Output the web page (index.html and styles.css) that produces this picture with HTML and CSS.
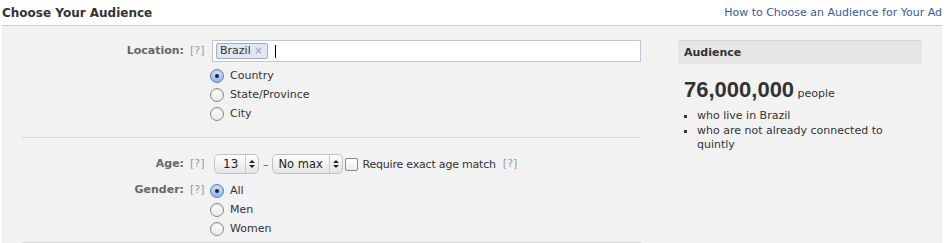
FILE: index.html
```html
<!DOCTYPE html>
<html lang="en">
	<head>
		<meta charset="UTF-8" />
		<title>Choose Your Audience</title>
		<link rel="stylesheet" href="styles.css">
	</head>

	<body>
		<div class="page">
			<div class="page-header">
				<h2 class="page-title">Choose Your Audience</h2>
				<a class="help-link" href="#">How to Choose an Audience for Your Ad</a>
			</div>
			<div class="panel">
				<div class="targeting">
					<div class="field-row">
						<label class="field-label">Location:</label>
						<span class="field-help">[?]</span>
						<div class="field-body">
							<div class="token-input">
								<span class="token">Brazil <span class="token-x">×</span></span>
								<span class="caret"></span>
							</div>
							<ul class="radio-list first-list">
								<li><span class="radio checked"></span>Country</li>
								<li><span class="radio"></span>State/Province</li>
								<li><span class="radio"></span>City</li>
							</ul>
						</div>
					</div>

					<div class="separator"></div>

					<div class="field-row age-row">
						<label class="field-label">Age:</label>
						<span class="field-help">[?]</span>
						<div class="field-body age-controls">
							<span class="select small">13<span class="select-arrows"></span></span>
							<span class="dash">–</span>
							<span class="select wide">No max<span class="select-arrows"></span></span>
							<span class="checkbox"></span>
							<span class="check-label">Require exact age match</span>
							<span class="field-help inline">[?]</span>
						</div>
					</div>

					<div class="field-row gender-row">
						<label class="field-label">Gender:</label>
						<span class="field-help">[?]</span>
						<div class="field-body">
							<ul class="radio-list">
								<li><span class="radio checked"></span>All</li>
								<li><span class="radio"></span>Men</li>
								<li><span class="radio"></span>Women</li>
							</ul>
						</div>
					</div>

					<div class="separator"></div>
				</div>

				<div class="audience">
					<div class="audience-header">Audience</div>
					<div class="audience-count"><strong>76,000,000</strong> people</div>
					<ul class="audience-list">
						<li>who live in Brazil</li>
						<li>who are not already connected to quintly</li>
					</ul>
				</div>
			</div>
		</div>
	</body>
</html>
```

FILE: styles.css
```css
body {
	margin: 0;
	background: #fff;
	color: #333;
	font-family: "DejaVu Sans", sans-serif;
	font-size: 11px;
}

.page {
	width: 940px;
	margin-left: 2px;
}

.page-header {
	display: flex;
	justify-content: space-between;
	align-items: center;
	height: 25px;
	border-bottom: 1px solid #ccc;
}

.page-title {
	margin: 0;
	font-size: 12px;
	font-weight: bold;
	color: #333;
}

.help-link {
	color: #3b5998;
	text-decoration: none;
	font-size: 11px;
}

.panel {
	display: flex;
	background: #f2f2f2;
	padding-top: 14px;
	height: 203px;
}

.targeting {
	width: 639px;
}

.field-row {
	display: flex;
}

.field-label {
	width: 182px;
	text-align: right;
	font-weight: bold;
	color: #666;
	line-height: 22px;
}

.field-help {
	width: 28px;
	padding-left: 6px;
	box-sizing: border-box;
	color: #999;
	line-height: 22px;
}

.field-help.inline {
	width: auto;
	padding-left: 7px;
}

.field-body {
	flex: 1;
}

.token-input {
	display: flex;
	align-items: center;
	height: 20px;
	border: 1px solid #bdc7d8;
	background: #fff;
	padding-left: 3px;
}

.token {
	display: inline-block;
	height: 14px;
	line-height: 14px;
	padding: 0 4px 0 3px;
	border: 1px solid #9daccc;
	border-radius: 2px;
	background: #e2e6f0;
	color: #333;
}

.token-x {
	color: #8f9cbb;
	font-size: 10px;
}

.caret {
	width: 1px;
	height: 13px;
	margin-left: 7px;
	background: #000;
}

.radio-list {
	list-style: none;
	margin: 0;
	padding: 0;
}

.first-list {
	margin-top: 4px;
}

.radio-list li {
	display: flex;
	align-items: center;
	height: 19px;
	color: #333;
}

.radio {
	width: 12px;
	height: 12px;
	margin: 0 6px 0 -2px;
	border: 1px solid #8a8a8a;
	border-radius: 50%;
	background: linear-gradient(#fff, #e8e8e8);
	box-shadow: inset 0 1px 1px rgba(0, 0, 0, 0.15);
	display: flex;
	align-items: center;
	justify-content: center;
}

.radio.checked {
	border-color: #5a7fb8;
	background: linear-gradient(#d6e6fb, #8db6ef);
}

.radio.checked::after {
	content: "";
	width: 4px;
	height: 4px;
	border-radius: 50%;
	background: #222;
}

.separator {
	height: 1px;
	background: #d6d6d6;
	margin-left: 20px;
}

.targeting > .separator:nth-child(2) {
	margin-top: 14px;
}

.age-row {
	margin-top: 15px;
	align-items: center;
}

.age-controls {
	display: flex;
	align-items: center;
	margin-left: 2px;
}

.select {
	display: flex;
	align-items: center;
	height: 18px;
	padding-left: 8px;
	border: 1px solid #c2c2c2;
	border-radius: 5px;
	background: linear-gradient(#fefefe, #e4e4e4);
	color: #222;
	font-size: 12px;
}

.select.small {
	width: 35px;
}

.select.wide {
	width: 63px;
	padding-left: 6px;
	font-size: 11.5px;
}

.select-arrows {
	margin-left: auto;
	width: 12px;
	height: 18px;
	border-left: 1px solid #c9c9c9;
	position: relative;
}

.select-arrows::before,
.select-arrows::after {
	content: "";
	position: absolute;
	left: 3px;
	border-left: 3px solid transparent;
	border-right: 3px solid transparent;
}

.select-arrows::before {
	top: 5px;
	border-bottom: 3px solid #222;
}

.select-arrows::after {
	top: 10px;
	border-top: 3px solid #222;
}

.dash {
	margin: 0 3px 0 4px;
	color: #555;
}

.checkbox {
	width: 11px;
	height: 11px;
	margin: 0 5px 0 2px;
	border: 1px solid #8a8a8a;
	border-radius: 2px;
	background: linear-gradient(#fff, #ececec);
}

.check-label {
	color: #333;
	letter-spacing: -0.2px;
}

.gender-row {
	margin-top: 4px;
}

.gender-row .field-body {
	padding-top: 2px;
}

.gender-row + .separator {
	margin-top: 4px;
}

.audience {
	width: 244px;
	margin-left: 37px;
}

.audience-header {
	height: 23px;
	line-height: 23px;
	padding-left: 6px;
	border-top: 1px solid #d8d8d8;
	background: #e6e6e6;
	font-weight: bold;
	color: #333;
}

.audience-count {
	margin-top: 13px;
	padding-left: 6px;
	color: #333;
}

.audience-count strong {
	font-family: "Liberation Sans", sans-serif;
	font-size: 22px;
}

.audience-list {
	margin: 6px 0 0;
	padding: 0 30px 0 19px;
	list-style: square;
	line-height: 14.5px;
}
```
